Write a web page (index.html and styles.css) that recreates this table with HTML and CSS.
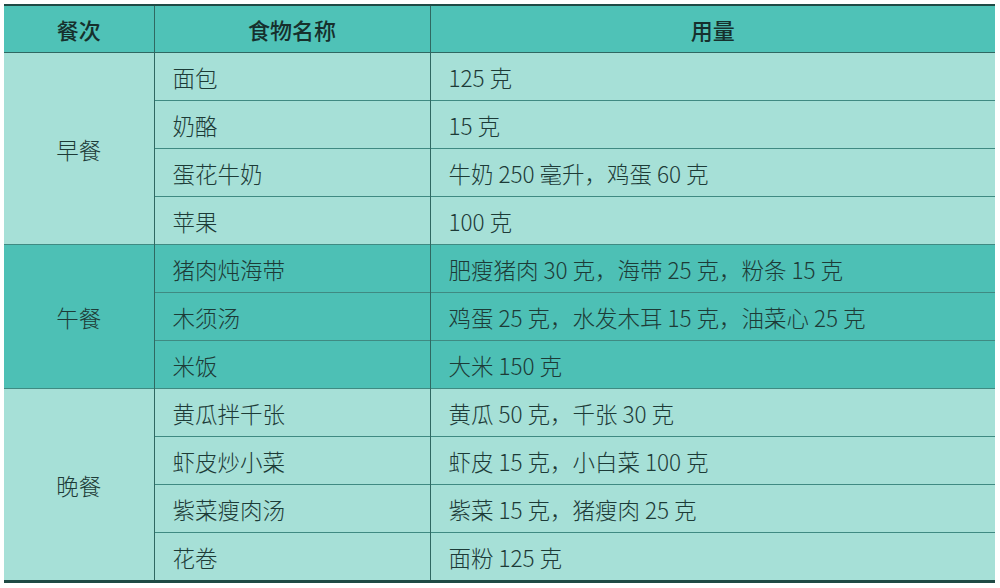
FILE: index.html
```html
<!DOCTYPE html>
<html lang="zh">
<head>
<meta charset="utf-8">
<link rel="stylesheet" href="styles.css">
</head>
<body>
<table class="menu">
  <colgroup>
    <col class="c1"><col class="c2"><col class="c3">
  </colgroup>
  <thead>
    <tr><th>餐次</th><th>食物名称</th><th>用量</th></tr>
  </thead>
  <tbody class="light">
    <tr><td class="meal" rowspan="4">早餐</td><td>面包</td><td>125 克</td></tr>
    <tr><td>奶酪</td><td>15 克</td></tr>
    <tr><td>蛋花牛奶</td><td>牛奶 250 毫升，鸡蛋 60 克</td></tr>
    <tr><td>苹果</td><td>100 克</td></tr>
  </tbody>
  <tbody class="dark">
    <tr><td class="meal" rowspan="3">午餐</td><td>猪肉炖海带</td><td>肥瘦猪肉 30 克，海带 25 克，粉条 15 克</td></tr>
    <tr><td>木须汤</td><td>鸡蛋 25 克，水发木耳 15 克，油菜心 25 克</td></tr>
    <tr><td>米饭</td><td>大米 150 克</td></tr>
  </tbody>
  <tbody class="light last">
    <tr><td class="meal" rowspan="4">晚餐</td><td>黄瓜拌千张</td><td>黄瓜 50 克，千张 30 克</td></tr>
    <tr><td>虾皮炒小菜</td><td>虾皮 15 克，小白菜 100 克</td></tr>
    <tr><td>紫菜瘦肉汤</td><td>紫菜 15 克，猪瘦肉 25 克</td></tr>
    <tr><td>花卷</td><td>面粉 125 克</td></tr>
  </tbody>
</table>
</body>
</html>
```

FILE: styles.css
```css
html, body {
  margin: 0;
  padding: 0;
  background: #ffffff;
}
body {
  padding: 4px 0 0 4px;
  font-family: "Noto Sans CJK SC", "Noto Sans", sans-serif;
  color: #1d3b37;
}
.menu {
  border-collapse: collapse;
  width: 991px;
  table-layout: fixed;
  border-top: 2px solid #1f4a45;
  border-bottom: 3px solid #1f4a45;
}
.c1 { width: 150px; }
.c2 { width: 276px; }
.c3 { width: 565px; }
.menu th {
  background: #4fc2b7;
  height: 46px;
  padding: 0;
  font-size: 22px;
  font-weight: 500;
  text-align: center;
  color: #16302d;
  border-left: 1px solid #2f6862;
  border-bottom: 1px solid #2f6862;
}
.menu th:first-child { border-left: none; }
.menu td {
  height: 47px;
  padding: 0 0 0 18px;
  font-size: 22.5px;
  font-weight: 300;
  border-left: 1px solid #2f6862;
  border-top: 1px solid #3f8a82;
  white-space: nowrap;
}
.menu td.meal {
  border-left: none;
  padding: 0;
  text-align: center;
}
.light td { background: #a6e0d7; }
.dark td { background: #4dc0b5; }
```
